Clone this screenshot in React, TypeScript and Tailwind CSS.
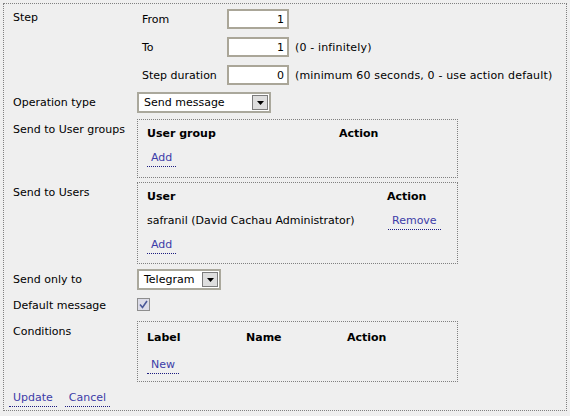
import React from "react"

const font = { fontFamily: '"DejaVu Sans", Verdana, sans-serif' }

function Link({ children }: { children: React.ReactNode }) {
  return (
    <span className="inline-block px-[4px] pb-[2px] -mb-[3px] leading-[13px] text-[#3c3ca8] border-b border-dotted border-[#1c1c80]">
      {children}
    </span>
  )
}

function Select({ value, width }: { value: string; width: string }) {
  return (
    <div className={`${width} h-[21px] bg-white border-2 border-[#aaa89c] flex items-center`}>
      <span className="flex-1 pl-[5px] leading-[13px]">{value}</span>
      <span className="w-[16px] h-[15px] mr-[1px] bg-[#dedede] border border-[#7c7c7c] flex items-center justify-center">
        <svg width="7" height="4" viewBox="0 0 7 4">
          <path d="M0 0h7L3.5 4z" fill="#000" />
        </svg>
      </span>
    </div>
  )
}

function NumInput({ value }: { value: string }) {
  return (
    <div className="w-[62px] h-[20px] bg-white border-2 border-[#aaa698] flex items-center justify-end pr-[3px] leading-[13px]">
      {value}
    </div>
  )
}

function Row({ label, className, labelPad = "pt-[4px]", children }: { label: string; className: string; labelPad?: string; children: React.ReactNode }) {
  return (
    <div className={`flex items-start pl-[9px] ${className}`}>
      <div className={`w-[124px] leading-[13px] ${labelPad}`}>{label}</div>
      <div>{children}</div>
    </div>
  )
}

export default function App() {
  const steps = [
    { label: "From", value: "1", hint: "" },
    { label: "To", value: "1", hint: "(0 - infinitely)" },
    { label: "Step duration", value: "0", hint: "(minimum 60 seconds, 0 - use action default)" },
  ]

  return (
    <div className="min-h-screen w-[570px] h-[416px] bg-[#efefef] pt-[3px] text-[11px] text-black" style={font}>
      <div className="ml-[3px] w-[564px] h-[408px] border border-dotted border-[#808080] flex flex-col">
        {/* Step */}
        <Row label="Step" className="mt-[5px]" labelPad="pt-[2px]">
          <div className="flex flex-col gap-[8px]">
            {steps.map((s) => (
              <div key={s.label} className="flex items-center h-[20px]">
                <span className="w-[90px] pl-[5px] leading-[13px]">{s.label}</span>
                <NumInput value={s.value} />
                {s.hint && <span className="ml-[6px] leading-[13px] tracking-[0.15px]">{s.hint}</span>}
              </div>
            ))}
          </div>
        </Row>

        {/* Operation type */}
        <Row label="Operation type" className="mt-[7px]">
          <Select value="Send message" width="w-[134px]" />
        </Row>

        {/* User groups */}
        <Row label="Send to User groups" className="mt-[6px]">
          <div className="w-[321px] border border-dotted border-[#808080] pt-[1px] pb-[8px] pl-[9px]">
            <div className="flex items-center h-[24px] font-bold leading-[13px]">
              <span className="w-[192px]">User group</span>
              <span>Action</span>
            </div>
            <div className="flex items-center h-[24px]">
              <Link>Add</Link>
            </div>
          </div>
        </Row>

        {/* Users */}
        <Row label="Send to Users" className="mt-[4px]">
          <div className="w-[321px] border border-dotted border-[#808080] pt-[1px] pb-[7px] pl-[9px]">
            <div className="flex items-center h-[24px] font-bold leading-[13px]">
              <span className="w-[240px]">User</span>
              <span>Action</span>
            </div>
            <div className="flex items-center h-[24px] leading-[13px]">
              <span className="w-[241px]">safranil (David Cachau Administrator)</span>
              <Link>Remove</Link>
            </div>
            <div className="flex items-center h-[24px]">
              <Link>Add</Link>
            </div>
          </div>
        </Row>

        {/* Send only to */}
        <Row label="Send only to" className="mt-[5px]">
          <Select value="Telegram" width="w-[84px]" />
        </Row>

        {/* Default message */}
        <Row label="Default message" className="mt-[8px]" labelPad="pt-[1px]">
          <div className="w-[13px] h-[13px] border border-[#8e8e8e] bg-[#dcdce8] flex items-center justify-center">
            <svg width="9" height="9" viewBox="0 0 9 9">
              <path d="M1 4.5l2.5 3L8 1" fill="none" stroke="#4a5898" strokeWidth="1.6" />
            </svg>
          </div>
        </Row>

        {/* Conditions */}
        <Row label="Conditions" className="mt-[9px]">
          <div className="w-[321px] border border-dotted border-[#808080] pt-[2px] pb-[3px] pl-[9px]">
            <div className="flex items-center h-[26px] font-bold leading-[13px]">
              <span className="w-[99px]">Label</span>
              <span className="w-[101px]">Name</span>
              <span>Action</span>
            </div>
            <div className="flex items-center h-[28px]">
              <Link>New</Link>
            </div>
          </div>
        </Row>

        {/* Buttons */}
        <div className="flex gap-[8px] pl-[5px] mt-[9px]">
          <Link>Update</Link>
          <Link>Cancel</Link>
        </div>
      </div>
    </div>
  )
}
